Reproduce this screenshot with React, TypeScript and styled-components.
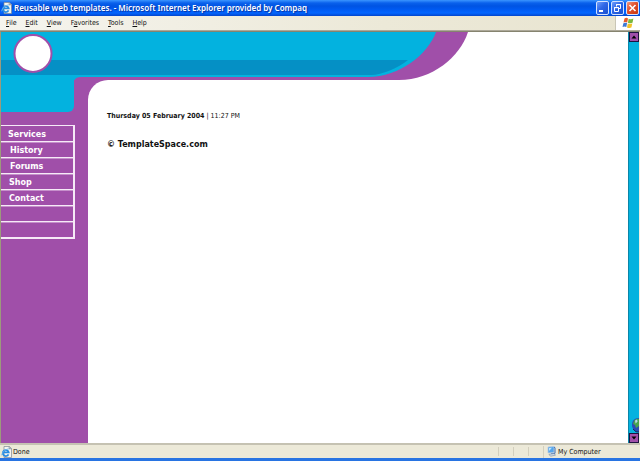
import React from "react";
import styled, { createGlobalStyle } from "styled-components";

const purple = "#a04fa9";
const cyan = "#03b2df";
const chrome = "#ece9d8";

const GlobalStyle = createGlobalStyle`
  *, *::before, *::after { box-sizing: border-box; }
  html, body, #root { height: 100%; }
  body { margin: 0; overflow: hidden; background: #fff; font-family: "DejaVu Sans", sans-serif; }
  button { padding: 0; margin: 0; border: 0; font: inherit; color: inherit; background: none; }
`;

const Window = styled.div`
  display: flex;
  flex-direction: column;
  min-height: 100vh;
  border-bottom: 3px solid #2874e2;
`;

const TitleBar = styled.header`
  display: flex;
  align-items: center;
  height: 16px;
  padding: 0 1px;
  gap: 2px;
  color: #fff;
  background: linear-gradient(#3b95ff 0, #0a61ec 3px, #0054e3 6px, #0059f0 9px, #0366ff 13px, #0345cb 16px);
`;

const Title = styled.h1`
  flex: 1;
  margin: 0;
  font: 600 8px/14px "Noto Sans", sans-serif;
  white-space: nowrap;
  text-shadow: 1px 1px 1px #08319c;
`;

const WindowButtons = styled.div`
  display: flex;
  gap: 2px;
`;

const WindowButton = styled.button<{ $close?: boolean }>`
  display: flex;
  width: 13px;
  height: 14px;
  border: 1px solid #d3e2ff;
  border-radius: 2px;
  background: ${(p) =>
    p.$close
      ? "linear-gradient(135deg, #ef9a80, #e0502c 45%, #c83810)"
      : "linear-gradient(135deg, #6f9dfa, #2e66e6 45%, #1950cf)"};
`;

const MenuBar = styled.div`
  display: flex;
  height: 15px;
  border-bottom: 1px solid #aca899;
  background: linear-gradient(90deg, #f5f4ee, ${chrome} 60%, #e8e4d0);
`;

const Menus = styled.nav`
  display: flex;
  flex: 1;
  align-items: center;
  gap: 9px;
  padding-left: 6px;
`;

const Menu = styled.button`
  font: 7px/12px "DejaVu Sans Condensed", "DejaVu Sans", sans-serif;
  color: #111;
`;

const Throbber = styled.div`
  display: flex;
  align-items: center;
  justify-content: center;
  width: 25px;
  border-left: 1px solid #c9c6b6;
  background: #fff;
`;

const Viewport = styled.div`
  display: flex;
  flex: 1;
  border-top: 1px solid #86846f;
  border-right: 1px solid #f1efe2;
  border-left: 1px solid #9c9a7c;
`;

const Page = styled.div`
  display: flex;
  flex: 1;
  flex-direction: column;
  min-width: 0;
  background: #fff;
`;

const Banner = styled.div`
  height: 48px;

  svg { display: block; }
`;

const Columns = styled.div`
  display: flex;
  flex: 1;
`;

const Sidebar = styled.aside`
  width: 87px;
  background: ${purple};
`;

const SidebarCap = styled.div`
  width: 73px;
  height: 32px;
  border-radius: 0 0 6px 0;
  background: ${cyan};
`;

const Links = styled.ul`
  width: 74px;
  margin: 13px 0 0;
  padding: 0;
  list-style: none;
  border: 2px solid #f6eaf7;
  border-width: 1px 2px 1px 0;
`;

const LinkRow = styled.li<{ $indent: number }>`
  height: 16px;
  padding-left: ${(p) => p.$indent}px;
  border: 0 solid #f6eaf7;
  border-bottom-width: 1px;
  box-shadow: 0 1px 0 #c690cb;

  &:last-child { box-shadow: none; }
`;

const SideLink = styled.a`
  display: block;
  font: bold 8px/17px "DejaVu Sans", sans-serif;
  color: #fff;
  text-decoration: none;
`;

const MainFrame = styled.div`
  display: flex;
  flex: 1;
  background: linear-gradient(90deg, ${purple} 24px, #fff 24px);
`;

const Main = styled.main`
  flex: 1;
  padding: 31px 19px 0;
  border-radius: 20px 0 0 0;
  background: #fff;
`;

const DateLine = styled.p`
  margin: 0;
  font: 7px/10px "DejaVu Sans Condensed", "DejaVu Sans", sans-serif;
  color: #111;
`;

const Copyright = styled.p`
  margin: 18px 0 0;
  font: bold 8px/12px "DejaVu Sans", sans-serif;
  color: #111;
`;

const ScrollBar = styled.div`
  display: flex;
  flex-direction: column;
  justify-content: space-between;
  width: 11px;
  border-left: 1px solid #0b86a8;
  background: ${cyan};
`;

const ScrollButton = styled.button`
  display: flex;
  align-items: center;
  justify-content: center;
  width: 10px;
  height: 10px;
  border: 1px solid #1d1440;
  background: ${purple};
`;

const ScrollEnd = styled.div`
  display: flex;
  flex-direction: column;
  align-items: flex-end;
`;

const StatusBar = styled.footer`
  display: flex;
  align-items: center;
  height: 15px;
  padding-left: 1px;
  border-top: 2px solid #c5c2b2;
  font: 7px/12px "DejaVu Sans Condensed", "DejaVu Sans", sans-serif;
  color: #111;
  background: ${chrome};
`;

const StatusText = styled.span`
  display: flex;
  flex: 1;
  align-items: center;
  gap: 1px;
`;

const StatusCell = styled.span`
  width: 15px;
  height: 9px;
  border-left: 1px solid #d3cfbd;
`;

const Zone = styled.span`
  display: flex;
  align-items: center;
  gap: 2px;
  width: 97px;
  padding-left: 3px;
  border-left: 1px solid #d3cfbd;
`;

const PageIcon = () => (
  <svg width="11" height="12" viewBox="0 0 11 12" aria-hidden="true">
    <path d="M3 .5h5.5L10.5 2.5v9H3z" fill="#f5f5ef" stroke="#7d8794" strokeWidth=".7" />
    <path d="M8.2.7v2h2" fill="none" stroke="#657080" strokeWidth=".7" />
    <path d="M7.5 8.3A3 3 0 1 1 7.7 6.3H2.5" fill="none" stroke="#258be2" strokeWidth="1.7" />
    <path d="M.6 9.3C1 6 5 2.5 8.5 3" fill="none" stroke="#71b8ec" strokeWidth=".8" />
  </svg>
);

const Flag = () => (
  <svg width="12" height="12" viewBox="0 0 12 12" aria-hidden="true">
    <path d="M2.5 1.5Q4.3.3 6 1.4L5.2 5.4Q3.5 4.5 1.5 5.5z" fill="#e95b2b" />
    <path d="M6.7 1.7Q9 2.8 11.4 1.6L10.5 5.8Q8 6.7 5.9 5.7z" fill="#79b83c" />
    <path d="M1.4 6.2Q3.3 5.2 5.1 6.1L4.3 10Q2.4 9 .5 10.1z" fill="#3d78d6" />
    <path d="M5.8 6.4Q8 7.4 10.3 6.5L9.4 10.5Q7.3 11.5 5 10.4z" fill="#f1c128" />
  </svg>
);

const BannerArt = () => (
  <svg width="468" height="48" viewBox="0 0 468 48" aria-hidden="true">
    <path d="M0 0H467C459 25 431 48 398 48H0z" fill={purple} />
    <path d="M0 0H435C427 22 399 45 367 45H80Q73 45 73 51H0z" fill={cyan} />
    <path d="M0 28H407C397 36 381 43 370 43H0z" fill="#0590c5" />
    <circle cx="32" cy="21.5" r="18.5" fill="#fff" stroke={purple} strokeWidth="2" />
  </svg>
);

const Globe = () => (
  <svg width="7" height="15" viewBox="0 0 7 15" aria-hidden="true">
    <path d="M7 0C2 0 0 3 0 7s3 7 7 7z" fill="#2b4bb5" />
    <path d="M2 3Q4 0 7 1v7L4 10 3 7 1 6z" fill="#48a44e" />
    <path d="M3 2.5l2-1 .6 2-2 2z" fill="#bcd8e8" />
    <path d="M1 11q3 4 6 3" fill="none" stroke="#15225c" />
  </svg>
);

const Computer = () => (
  <svg width="9" height="11" viewBox="0 0 9 11" aria-hidden="true">
    <path d="M1 1l6-.5V6.5L1 7z" fill="#55a6ed" stroke="#b9cae0" strokeWidth=".7" />
    <path d="M2 2l3-.3L2 5z" fill="#bce6ff" />
    <path d="M7 1l1 .7v5.6L4 8" fill="none" stroke="#3c6cb4" />
    <path d="M2 8.4l5-.8 1.5 1.6-5 1z" fill="#d9e2ea" stroke="#7186a3" strokeWidth=".6" />
  </svg>
);

const Arrow = ({ down = false }: { down?: boolean }) => (
  <svg width="6" height="4" viewBox="0 0 6 4" aria-hidden="true">
    <path d={down ? "M.5.5h5L3 3.5z" : "M.5 3.5h5L3 .5z"} fill="#000" />
  </svg>
);

const menus = [
  { before: "", accessKey: "F", after: "ile" },
  { before: "", accessKey: "E", after: "dit" },
  { before: "", accessKey: "V", after: "iew" },
  { before: "F", accessKey: "a", after: "vorites" },
  { before: "", accessKey: "T", after: "ools" },
  { before: "", accessKey: "H", after: "elp" },
];

const links = [
  { label: "Services", indent: 7 },
  { label: "History", indent: 9 },
  { label: "Forums", indent: 9 },
  { label: "Shop", indent: 8 },
  { label: "Contact", indent: 8 },
  { label: "", indent: 8 },
  { label: "", indent: 8 },
];

export default function App() {
  return (
    <>
      <GlobalStyle />
      <Window>
        <TitleBar>
          <PageIcon />
          <Title>Reusable web templates. - Microsoft Internet Explorer provided by Compaq</Title>
          <WindowButtons>
            <WindowButton aria-label="Minimize">
              <svg width="11" height="12" viewBox="0 0 11 12"><path d="M2 9h4" stroke="#fff" strokeWidth="2" /></svg>
            </WindowButton>
            <WindowButton aria-label="Restore">
              <svg width="11" height="12" viewBox="0 0 11 12" fill="none" stroke="#fff">
                <path d="M4.5 4.5V2.5h4v4h-2M4 2.7h5M2.5 5.5h4v4h-4zM2 5.7h5" />
              </svg>
            </WindowButton>
            <WindowButton $close aria-label="Close">
              <svg width="11" height="12" viewBox="0 0 11 12"><path d="M2.5 3l6 6M8.5 3l-6 6" stroke="#fff" strokeWidth="1.6" /></svg>
            </WindowButton>
          </WindowButtons>
        </TitleBar>
        <MenuBar>
          <Menus>
            {menus.map((m) => (
              <Menu key={m.accessKey}>{m.before}<u>{m.accessKey}</u>{m.after}</Menu>
            ))}
          </Menus>
          <Throbber><Flag /></Throbber>
        </MenuBar>
        <Viewport>
          <Page>
            <Banner><BannerArt /></Banner>
            <Columns>
              <Sidebar>
                <SidebarCap />
                <nav>
                  <Links>
                    {links.map((link, i) => (
                      <LinkRow key={i} $indent={link.indent}>
                        {link.label && <SideLink href="#">{link.label}</SideLink>}
                      </LinkRow>
                    ))}
                  </Links>
                </nav>
              </Sidebar>
              <MainFrame>
                <Main>
                  <DateLine><b>Thursday 05 February 2004</b> | 11:27 PM</DateLine>
                  <Copyright>© TemplateSpace.com</Copyright>
                </Main>
              </MainFrame>
            </Columns>
          </Page>
          <ScrollBar>
            <ScrollButton aria-label="Scroll up"><Arrow /></ScrollButton>
            <ScrollEnd>
              <Globe />
              <ScrollButton aria-label="Scroll down"><Arrow down /></ScrollButton>
            </ScrollEnd>
          </ScrollBar>
        </Viewport>
        <StatusBar>
          <StatusText><PageIcon />Done</StatusText>
          <StatusCell />
          <StatusCell />
          <StatusCell />
          <Zone><Computer />My Computer</Zone>
        </StatusBar>
      </Window>
    </>
  );
}
